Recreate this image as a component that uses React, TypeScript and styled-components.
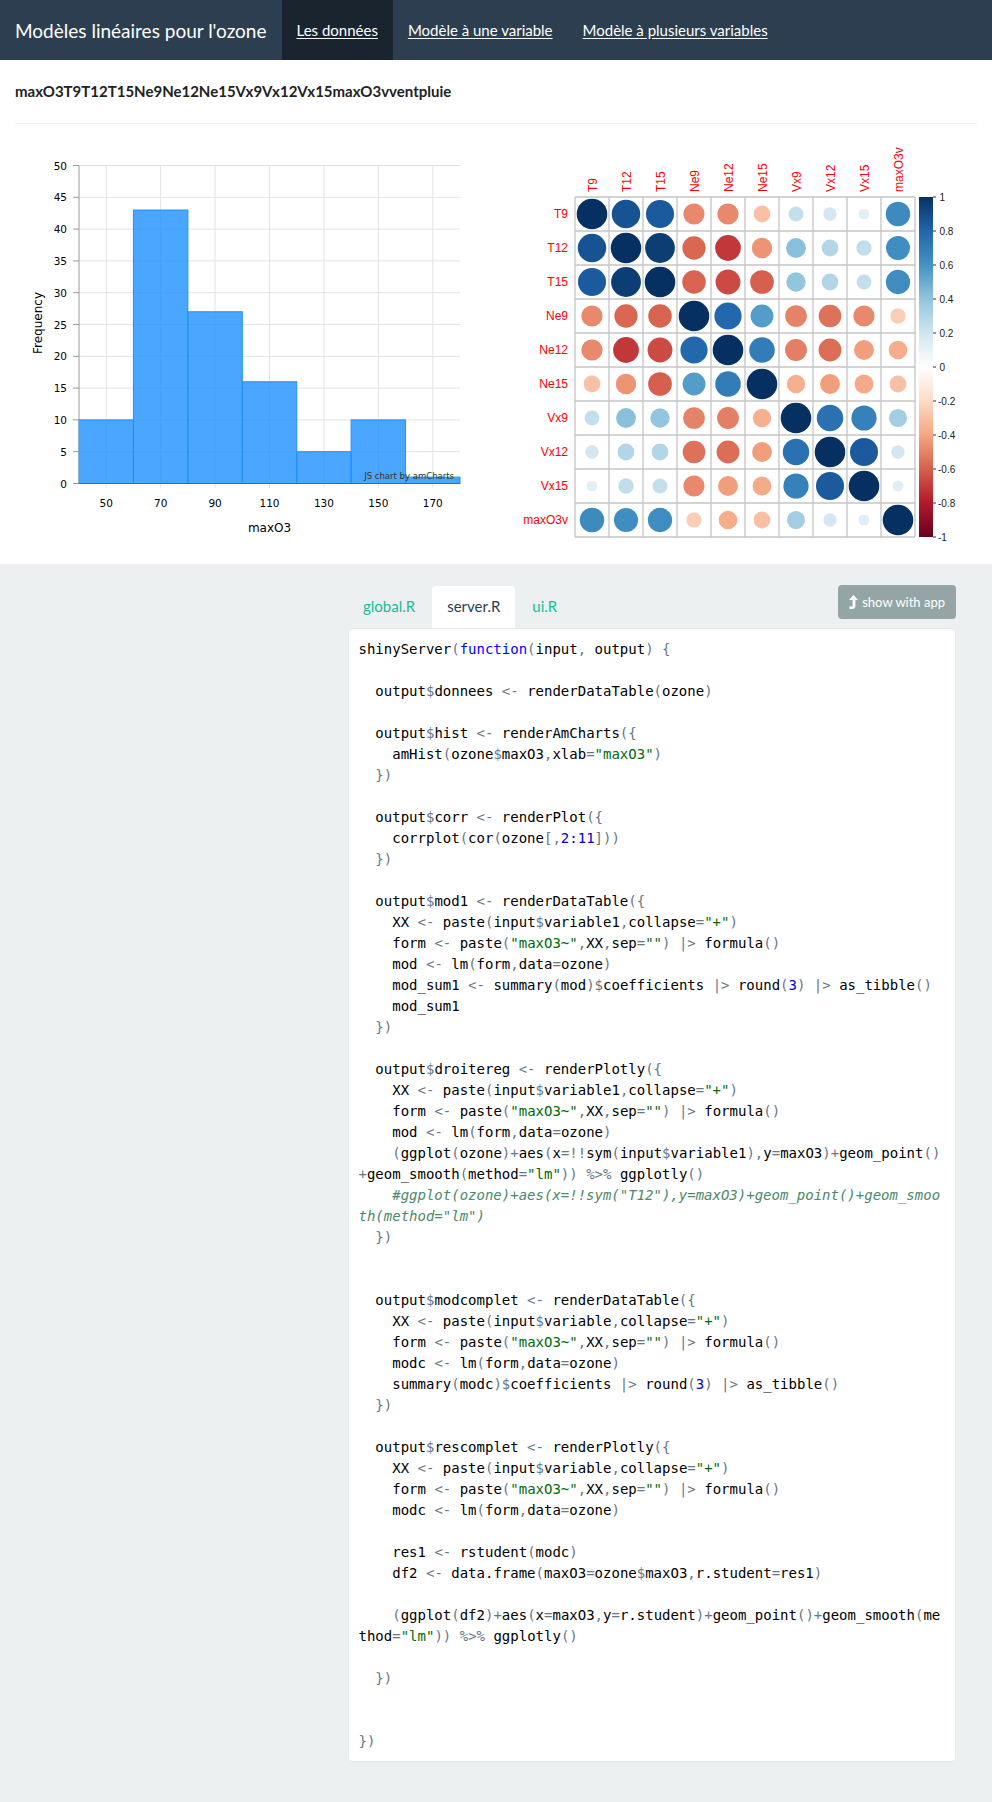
import styled, { createGlobalStyle } from 'styled-components'

const GlobalStyle = createGlobalStyle`
  * { box-sizing: border-box; }
  body {
    margin: 0;
    font-family: Lato, "Open Sans", sans-serif;
    color: #2c3e50;
    background: #fff;
  }
`

const SERVER_R = `shinyServer(function(input, output) {

  output$donnees <- renderDataTable(ozone)

  output$hist <- renderAmCharts({
    amHist(ozone$maxO3,xlab="maxO3")
  })

  output$corr <- renderPlot({
    corrplot(cor(ozone[,2:11]))
  })

  output$mod1 <- renderDataTable({
    XX <- paste(input$variable1,collapse="+")
    form <- paste("maxO3~",XX,sep="") |> formula()
    mod <- lm(form,data=ozone)
    mod_sum1 <- summary(mod)$coefficients |> round(3) |> as_tibble()
    mod_sum1
  })

  output$droitereg <- renderPlotly({
    XX <- paste(input$variable1,collapse="+")
    form <- paste("maxO3~",XX,sep="") |> formula()
    mod <- lm(form,data=ozone)
    (ggplot(ozone)+aes(x=!!sym(input$variable1),y=maxO3)+geom_point()+geom_smooth(method="lm")) %>% ggplotly()
    #ggplot(ozone)+aes(x=!!sym("T12"),y=maxO3)+geom_point()+geom_smooth(method="lm")
  })


  output$modcomplet <- renderDataTable({
    XX <- paste(input$variable,collapse="+")
    form <- paste("maxO3~",XX,sep="") |> formula()
    modc <- lm(form,data=ozone)
    summary(modc)$coefficients |> round(3) |> as_tibble()
  })

  output$rescomplet <- renderPlotly({
    XX <- paste(input$variable,collapse="+")
    form <- paste("maxO3~",XX,sep="") |> formula()
    modc <- lm(form,data=ozone)

    res1 <- rstudent(modc)
    df2 <- data.frame(maxO3=ozone$maxO3,r.student=res1)

    (ggplot(df2)+aes(x=maxO3,y=r.student)+geom_point()+geom_smooth(method="lm")) %>% ggplotly()

  })


})`

type TokKind = 'string' | 'comment' | 'keyword' | 'number' | 'ident' | 'space' | 'op'

function tokenize(src: string) {
  const re = /("[^"\n]*")|(#[^\n]*)|(\bfunction\b)|(\d+(?::\d+)?)|([A-Za-z_.][A-Za-z0-9_.]*)|(\s+)|(.)/g
  const out: { kind: TokKind; text: string }[] = []
  let m: RegExpExecArray | null
  while ((m = re.exec(src))) {
    const kind: TokKind = m[1] ? 'string' : m[2] ? 'comment' : m[3] ? 'keyword'
      : m[4] ? 'number' : m[5] ? 'ident' : m[6] ? 'space' : 'op'
    out.push({ kind, text: m[0] })
  }
  return out
}

const VARS = ['T9', 'T12', 'T15', 'Ne9', 'Ne12', 'Ne15', 'Vx9', 'Vx12', 'Vx15', 'maxO3v']
const COR = [
  [1, 0.87, 0.84, -0.48, -0.48, -0.3, 0.24, 0.19, 0.12, 0.64],
  [0.87, 1, 0.95, -0.58, -0.71, -0.45, 0.42, 0.3, 0.25, 0.62],
  [0.84, 0.95, 1, -0.59, -0.66, -0.6, 0.4, 0.3, 0.24, 0.63],
  [-0.48, -0.58, -0.59, 1, 0.79, 0.56, -0.5, -0.55, -0.48, -0.25],
  [-0.48, -0.71, -0.66, 0.79, 1, 0.7, -0.51, -0.56, -0.42, -0.37],
  [-0.3, -0.45, -0.6, 0.56, 0.7, 1, -0.36, -0.42, -0.38, -0.3],
  [0.24, 0.42, 0.4, -0.5, -0.51, -0.36, 1, 0.75, 0.68, 0.35],
  [0.19, 0.3, 0.3, -0.55, -0.56, -0.42, 0.75, 1, 0.84, 0.19],
  [0.12, 0.25, 0.24, -0.48, -0.42, -0.38, 0.68, 0.84, 1, 0.13],
  [0.64, 0.62, 0.63, -0.25, -0.37, -0.3, 0.35, 0.19, 0.13, 1],
]
const STOPS = ['#67001F', '#B2182B', '#D6604D', '#F4A582', '#FDDBC7', '#FFFFFF', '#D1E5F0', '#92C5DE', '#4393C3', '#2166AC', '#053061']

function hex(c: string) {
  return [1, 3, 5].map(i => parseInt(c.slice(i, i + 2), 16))
}
function corColor(r: number) {
  const t = ((r + 1) / 2) * 10
  const i = Math.min(9, Math.floor(t))
  const f = t - i
  const a = hex(STOPS[i])
  const b = hex(STOPS[i + 1])
  const c = a.map((v, k) => Math.round(v + (b[k] - v) * f))
  return `rgb(${c[0]},${c[1]},${c[2]})`
}

const BINS = [10, 43, 27, 16, 5, 10, 1]

function Histogram() {
  const left = 64
  const right = 445
  const top = 20.5
  const bottom = 338.5
  const x = (v: number) => left + ((v - 40) * (right - left)) / 140
  const y = (f: number) => bottom - (f * (bottom - top)) / 50
  const yTicks = Array.from({ length: 11 }, (_, i) => i * 5)
  const xTicks = [50, 70, 90, 110, 130, 150, 170]
  return (
    <ChartSvg width={466} height={400}>
      {yTicks.map(t => (
        <g key={t}>
          <line x1={left} x2={right} y1={y(t)} y2={y(t)} stroke="#e3e3e3" />
          <line x1={left - 6} x2={left} y1={y(t)} y2={y(t)} stroke="#9a9a9a" />
          <text x={left - 12} y={y(t) + 4} textAnchor="end" fontSize="10.5">{t}</text>
        </g>
      ))}
      {xTicks.map(t => (
        <g key={t}>
          <line x1={x(t)} x2={x(t)} y1={top} y2={bottom + 5} stroke="#e3e3e3" />
          <text x={x(t)} y={bottom + 23} textAnchor="middle" fontSize="10.5">{t}</text>
        </g>
      ))}
      {BINS.map((f, i) => (
        <rect
          key={i}
          x={x(40 + i * 20)}
          y={y(f)}
          width={x(60) - x(40)}
          height={bottom - y(f)}
          fill="#1e90ff"
          fillOpacity={0.8}
          stroke="#1e90ff"
        />
      ))}
      <line x1={left} x2={left} y1={top} y2={bottom} stroke="#9a9a9a" />
      <line x1={left} x2={right} y1={bottom} y2={bottom} stroke="#2f6fb8" />
      <text x={(left + right) / 2} y={bottom + 48} textAnchor="middle" fontSize="12">maxO3</text>
      <text transform={`translate(27 178) rotate(-90)`} textAnchor="middle" fontSize="12">Frequency</text>
      <text x={439} y={334} textAnchor="end" fontSize="8.5" fill="#333">JS chart by amCharts</text>
    </ChartSvg>
  )
}

function CorrPlot() {
  const gx = 64
  const gy = 52
  const cell = 34
  const n = VARS.length
  const bx = 408
  const ticks = [1, 0.8, 0.6, 0.4, 0.2, 0, -0.2, -0.4, -0.6, -0.8, -1]
  return (
    <CorrSvg width={466} height={400}>
      <defs>
        <linearGradient id="rdbu" x1="0" y1="0" x2="0" y2="1">
          {STOPS.slice().reverse().map((c, i) => (
            <stop key={i} offset={i / 10} stopColor={c} />
          ))}
        </linearGradient>
      </defs>
      {VARS.map((v, i) => (
        <text key={'r' + v} x={gx - 7} y={gy + i * cell + cell / 2 + 4} textAnchor="end" fill="#ff0000" fontSize="12">{v}</text>
      ))}
      {VARS.map((v, j) => (
        <text key={'c' + v} transform={`translate(${gx + j * cell + cell / 2 + 4.5} ${gy - 5}) rotate(-90)`} fill="#ff0000" fontSize="12">{v}</text>
      ))}
      <rect x={gx} y={gy} width={n * cell} height={n * cell} fill="#fff" />
      {COR.map((row, i) =>
        row.map((r, j) => (
          <circle
            key={i + '-' + j}
            cx={gx + j * cell + cell / 2}
            cy={gy + i * cell + cell / 2}
            r={15.3 * Math.sqrt(Math.abs(r))}
            fill={corColor(r)}
          />
        ))
      )}
      {Array.from({ length: n + 1 }, (_, k) => (
        <g key={'g' + k}>
          <line x1={gx + k * cell} x2={gx + k * cell} y1={gy} y2={gy + n * cell} stroke="#c4c4c4" strokeWidth={1.3} />
          <line x1={gx} x2={gx + n * cell} y1={gy + k * cell} y2={gy + k * cell} stroke="#c4c4c4" strokeWidth={1.3} />
        </g>
      ))}
      <rect x={bx} y={gy} width={14} height={n * cell} fill="url(#rdbu)" />
      {ticks.map((t, k) => (
        <g key={'t' + k}>
          <line x1={bx + 14} x2={bx + 17} y1={gy + k * cell} y2={gy + k * cell} stroke="#333" />
          <text x={t < 0 ? 427 : 428.5} y={gy + k * cell + 3.5} fontSize="10" fill="#222">{t}</text>
        </g>
      ))}
    </CorrSvg>
  )
}

function LevelUpIcon() {
  return (
    <svg width="9" height="14" viewBox="0 0 9 14">
      <path d="M4.5 0 L9 5 L6.4 5 L6.4 10.5 Q6.4 14 2.9 14 L0.4 14 L0.4 11.6 L2.6 11.6 Q3.6 11.6 3.6 10.6 L3.6 5 L0 5 Z" fill="#fff" />
    </svg>
  )
}

export default function App() {
  const tokens = tokenize(SERVER_R)
  return (
    <>
      <GlobalStyle />
      <Navbar>
        <Brand>Modèles linéaires pour l'ozone</Brand>
        <NavItem $active>Les données</NavItem>
        <NavItem>Modèle à une variable</NavItem>
        <NavItem>Modèle à plusieurs variables</NavItem>
      </Navbar>
      <Main>
        <VarTitle>maxO3T9T12T15Ne9Ne12Ne15Vx9Vx12Vx15maxO3vventpluie</VarTitle>
        <Rule />
        <PlotRow>
          <PlotCol><Histogram /></PlotCol>
          <PlotCol><CorrPlot /></PlotCol>
        </PlotRow>
      </Main>
      <Showcase>
        <CodeHeader>
          <Tabs>
            <Tab>global.R</Tab>
            <Tab $active>server.R</Tab>
            <Tab>ui.R</Tab>
          </Tabs>
          <ShowButton><LevelUpIcon />show with app</ShowButton>
        </CodeHeader>
        <Code>
          {tokens.map((t, i) => (t.kind === 'space' || t.kind === 'ident'
            ? t.text
            : <Tok key={i} $kind={t.kind}>{t.text}</Tok>))}
        </Code>
      </Showcase>
    </>
  )
}

const Navbar = styled.nav`
  height: 60px;
  display: flex;
  background: #2c3e50;
`

const Brand = styled.div`
  display: flex;
  align-items: center;
  padding: 0 15px;
  color: #fff;
  font-size: 19px;
`

const NavItem = styled.a<{ $active?: boolean }>`
  display: flex;
  align-items: center;
  padding: 0 15px;
  color: #fff;
  font-size: 15px;
  text-decoration: underline;
  text-underline-offset: 2px;
  background: ${p => (p.$active ? '#1a242f' : 'transparent')};
`

const Main = styled.div`
  padding: 21px 15px 19px;
`

const VarTitle = styled.div`
  font-size: 15px;
  font-weight: 700;
  line-height: 21px;
  color: #222;
`

const Rule = styled.hr`
  margin: 21px 0;
  border: 0;
  border-top: 1px solid #ecf0f1;
`

const PlotRow = styled.div`
  display: grid;
  grid-template-columns: 1fr 1fr;
  margin: 0 -15px;
`

const PlotCol = styled.div`
  padding: 0 15px;
  height: 400px;
`

const ChartSvg = styled.svg`
  display: block;
  font-family: "DejaVu Sans", Verdana, sans-serif;
  fill: #000;
`

const CorrSvg = styled.svg`
  display: block;
  font-family: "Liberation Sans", Arial, sans-serif;
`

const Showcase = styled.section`
  background: #ecf0f1;
  padding: 21px 36px 41px 348px;
`

const CodeHeader = styled.div`
  display: flex;
  justify-content: space-between;
  align-items: flex-start;
`

const Tabs = styled.div`
  display: flex;
  margin-top: 1px;
`

const Tab = styled.a<{ $active?: boolean }>`
  padding: 10px 15px 11px;
  margin-right: 2px;
  font-size: 15px;
  line-height: 21px;
  border-radius: 4px 4px 0 0;
  color: ${p => (p.$active ? '#2c3e50' : '#18bc9c')};
  background: ${p => (p.$active ? '#fff' : 'transparent')};
`

const ShowButton = styled.button`
  display: flex;
  align-items: center;
  gap: 4px;
  height: 34px;
  padding: 0 11px;
  border: 0;
  border-radius: 4px;
  background: #95a5a6;
  color: #fff;
  font-family: Lato, sans-serif;
  font-size: 13px;
`

const Code = styled.pre`
  margin: 0;
  padding: 9.5px;
  background: #fff;
  border: 1px solid #e6eaeb;
  border-radius: 4px;
  font-family: "DejaVu Sans Mono", monospace;
  font-size: 14px;
  line-height: 21px;
  color: #000;
  white-space: pre-wrap;
  word-break: break-all;
`

const TOK_COLORS: Record<TokKind, string> = {
  string: '#036a07',
  comment: '#4c886b',
  keyword: '#0000ff',
  number: '#0000cd',
  ident: '#000',
  space: '#000',
  op: '#687687',
}

const Tok = styled.span<{ $kind: TokKind }>`
  color: ${p => TOK_COLORS[p.$kind]};
  font-style: ${p => (p.$kind === 'comment' ? 'italic' : 'normal')};
`
